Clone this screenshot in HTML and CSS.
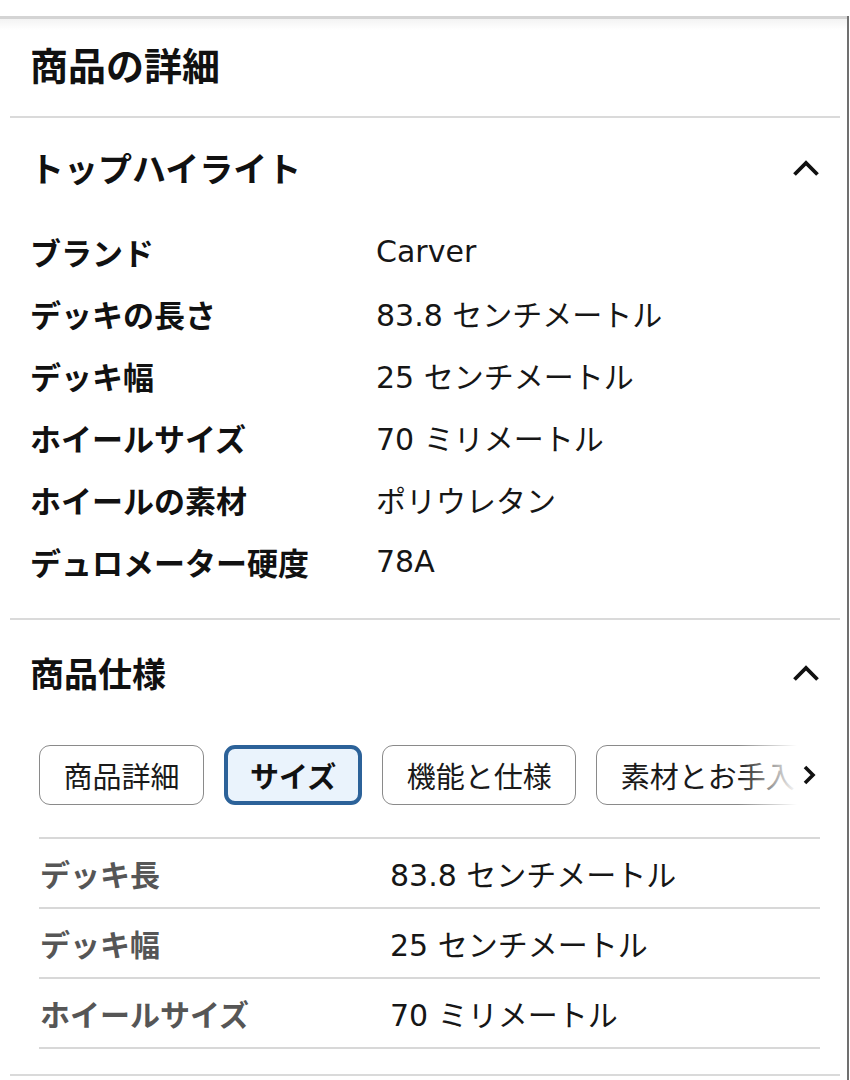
FILE: index.html
```html
<!DOCTYPE html>
<html lang="ja">
<head>
<meta charset="utf-8">
<title>商品の詳細</title>
<link rel="stylesheet" href="styles.css">
</head>
<body>
<div class="page">
  <div class="topbar"></div>
  <div class="topshade"></div>
  <h1 class="title">商品の詳細</h1>
  <div class="divider"></div>

  <section class="section">
    <div class="section-head head-1">
      <h2 class="section-title">トップハイライト</h2>
      <svg class="chev-up" width="28" height="18" viewBox="0 0 28 18"><polyline points="2.5,15.5 14,4 25.5,15.5" fill="none" stroke="#111" stroke-width="3.8"/></svg>
    </div>
    <div class="highlights">
      <div class="hl-label">ブランド</div><div class="hl-value">Carver</div>
      <div class="hl-label">デッキの長さ</div><div class="hl-value">83.8 センチメートル</div>
      <div class="hl-label">デッキ幅</div><div class="hl-value">25 センチメートル</div>
      <div class="hl-label">ホイールサイズ</div><div class="hl-value">70 ミリメートル</div>
      <div class="hl-label">ホイールの素材</div><div class="hl-value">ポリウレタン</div>
      <div class="hl-label">デュロメーター硬度</div><div class="hl-value">78A</div>
    </div>
  </section>
  <div class="divider"></div>

  <section class="section">
    <div class="section-head head-2">
      <h2 class="section-title">商品仕様</h2>
      <svg class="chev-up" width="28" height="18" viewBox="0 0 28 18"><polyline points="2.5,15.5 14,4 25.5,15.5" fill="none" stroke="#111" stroke-width="3.8"/></svg>
    </div>
    <div class="tabs">
      <div class="tab-track">
        <div class="tab">商品詳細</div>
        <div class="tab tab-active">サイズ</div>
        <div class="tab">機能と仕様</div>
        <div class="tab">素材とお手入れ</div>
      </div>
      <div class="tab-fade">
        <svg class="chev-right" width="14" height="22" viewBox="0 0 14 22"><polyline points="3,3 11,11 3,19" fill="none" stroke="#111" stroke-width="3.6"/></svg>
      </div>
    </div>
    <div class="spec-table">
      <div class="spec-row"><div class="spec-label">デッキ長</div><div class="spec-value">83.8 センチメートル</div></div>
      <div class="spec-row"><div class="spec-label">デッキ幅</div><div class="spec-value">25 センチメートル</div></div>
      <div class="spec-row"><div class="spec-label">ホイールサイズ</div><div class="spec-value">70 ミリメートル</div></div>
    </div>
  </section>
  <div class="divider"></div>
</div>
</body>
</html>
```

FILE: styles.css
```css
html, body {
  margin: 0;
  padding: 0;
  background: #fff;
}

body {
  font-family: "Noto Sans CJK JP", "Noto Sans", sans-serif;
  color: #111;
}

.page {
  width: 847px;
  min-height: 1080px;
  border-right: 2px solid #707070;
}

.topbar {
  margin-top: 16px;
  height: 3px;
  background: #d4d4d4;
}

.topshade {
  height: 11px;
  background: linear-gradient(#f3f3f3, #fff);
}

.title {
  margin: 0;
  padding: 10px 0 28px 30px;
  font-size: 38px;
  line-height: 48px;
  font-weight: 700;
}

.divider {
  height: 2px;
  background: #dadada;
  margin: 0 7px 0 10px;
}

.section-head {
  display: flex;
  align-items: center;
  justify-content: space-between;
  padding-left: 30px;
  padding-right: 27px;
}

.head-1 {
  padding-top: 26px;
  padding-bottom: 28px;
}

.head-2 {
  padding-top: 29px;
  padding-bottom: 48px;
}

.section-title {
  margin: 0;
  font-size: 34px;
  line-height: 48px;
  font-weight: 700;
}

.chev-up {
  display: block;
}

.highlights {
  display: grid;
  grid-template-columns: 346px 1fr;
  grid-auto-rows: 62px;
  align-items: center;
  padding: 0 0 26px 30px;
  font-size: 30px;
}

.hl-label {
  font-size: 31px;
  font-weight: 700;
  color: #111;
}

.hl-value,
.spec-value {
  font-family: "DejaVu Sans", "Noto Sans CJK JP", sans-serif;
  font-weight: 400;
  color: #161616;
}

.tabs {
  position: relative;
  margin: 0 27px 0 39px;
  overflow: hidden;
}

.tab-track {
  display: flex;
  gap: 20px;
}

.tab {
  flex: none;
  box-sizing: border-box;
  height: 60px;
  display: flex;
  align-items: center;
  padding: 0 23.5px;
  border: 1.5px solid #8a8a8a;
  border-radius: 11px;
  font-size: 29px;
  color: #1a1a1a;
  white-space: nowrap;
}

.tab-active {
  border: 4px solid #2c6299;
  background: #eaf3fc;
  padding: 0 22px;
  font-weight: 700;
  color: #111;
}

.tab-fade {
  position: absolute;
  top: 0;
  right: 0;
  bottom: 0;
  width: 82px;
  background: linear-gradient(to right, rgba(255, 255, 255, 0), #fff 72%);
  display: flex;
  align-items: center;
  justify-content: flex-end;
  padding-right: 4px;
  box-sizing: border-box;
}

.chev-right {
  display: block;
}

.spec-table {
  margin: 32px 27px 25px 39px;
  border-bottom: 2px solid #d8d8d8;
}

.spec-row {
  display: grid;
  grid-template-columns: 351px 1fr;
  align-items: center;
  height: 68px;
  border-top: 2px solid #d8d8d8;
  font-size: 30px;
}

.spec-label {
  font-weight: 700;
  color: #565656;
  padding-left: 1px;
}
```
